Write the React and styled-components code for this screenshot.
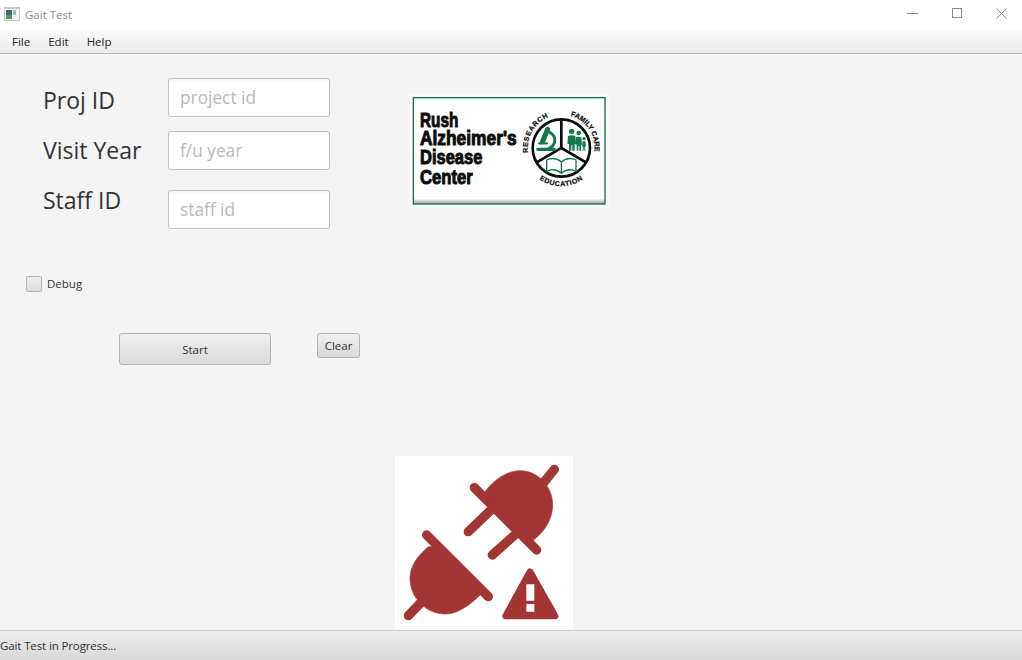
import React from "react";
import styled, { createGlobalStyle } from "styled-components";

const GlobalStyle = createGlobalStyle`
  html, body {
    margin: 0;
    height: 100%;
    overflow: hidden;
    background: #f4f4f4;
    font-family: "Open Sans", "Noto Sans", sans-serif;
  }
  #root {
    height: 100%;
  }
`;

const Window = styled.div`
  height: 660px;
  display: flex;
  flex-direction: column;
  color: #333;
`;

const TitleBar = styled.div`
  height: 30px;
  flex: none;
  background: #fff;
  display: flex;
  align-items: center;
  padding: 0 0 2px 4px;
  box-sizing: border-box;
`;

const AppTitle = styled.span`
  margin-left: 5px;
  font-size: 11.5px;
  color: #8c8c8c;
`;

const WindowControls = styled.div`
  margin: 0 0 2px auto;
  display: flex;
  align-items: center;
  gap: 34px;
  padding-right: 15px;
  color: #8a8a8a;
`;

const MenuBar = styled.div`
  height: 24px;
  flex: none;
  box-sizing: border-box;
  display: flex;
  align-items: center;
  padding: 0 0 1px 12px;
  gap: 18px;
  background: linear-gradient(#fafafa, #ebebeb);
  border-bottom: 1px solid #b9b9b9;
  font-size: 11.5px;
  color: #222;
`;

const Content = styled.main`
  flex: 1;
  min-height: 0;
  display: flex;
  flex-direction: column;
`;

const TopRow = styled.div`
  display: flex;
  align-items: flex-start;
  padding: 24px 0 0 43px;
`;

const Form = styled.div`
  display: flex;
  flex-direction: column;
  width: 287px;
`;

const FormRow = styled.div`
  display: flex;
  align-items: flex-start;
  margin-top: ${({ $top }) => $top || 0}px;
`;

const FieldLabel = styled.label`
  width: 125px;
  flex: none;
  font-size: 23px;
  line-height: 32px;
  color: #333;
  margin-top: ${({ $shift }) => $shift}px;
`;

const Field = styled.input`
  width: 162px;
  height: 39px;
  box-sizing: border-box;
  padding: 0 11px;
  border: 1px solid #c2c2c2;
  border-radius: 3px;
  background: linear-gradient(#f6f6f6, #fff 5px);
  font-family: inherit;
  font-size: 17.3px;
  outline: none;

  &::placeholder {
    color: #b9b9b9;
    opacity: 1;
  }
`;

const LogoFrame = styled.div`
  margin: 16px 0 0 79px;
  width: 200px;
  height: 114px;
  line-height: 0;
`;

const DebugRow = styled.label`
  display: flex;
  align-items: center;
  gap: 5px;
  margin: 46px 0 0 26px;
  height: 17px;
  font-size: 11.5px;
  color: #333;
`;

const CheckBox = styled.span`
  width: 16px;
  height: 16px;
  box-sizing: border-box;
  border: 1px solid #b5b5b5;
  border-radius: 2px;
  background: linear-gradient(#efefef, #dcdcdc);
`;

const ButtonRow = styled.div`
  display: flex;
  align-items: flex-start;
  gap: 46px;
  margin: 41px 0 0 119px;
`;

const Button = styled.button`
  width: ${({ $wide }) => ($wide ? 152 : 43)}px;
  height: ${({ $wide }) => ($wide ? 32 : 25)}px;
  padding: 0;
  border: 1px solid #b3b3b3;
  border-radius: 3px;
  background: linear-gradient(#efefef, #d9d9d9);
  font-family: inherit;
  font-size: 11.5px;
  color: #333;
`;

const AlertImage = styled.div`
  margin: auto 0 0 395px;
  width: 178px;
  height: 174px;
  background: #fff;
  line-height: 0;
`;

const StatusBar = styled.footer`
  height: 30px;
  flex: none;
  box-sizing: border-box;
  display: flex;
  align-items: center;
  border-top: 1px solid #cdcdcd;
  background: linear-gradient(#ececec, #d9d9d9);
  font-size: 11.5px;
  letter-spacing: -0.12px;
  color: #333;
  padding-bottom: 1px;
`;

const AppIcon = () => (
  <svg width="16" height="14" viewBox="0 0 16 14">
    <rect width="16" height="14" fill="#c9c9c9" />
    <rect x="1" y="2" width="14" height="11" fill="#f2f2f2" />
    <rect x="2" y="3" width="6" height="9" fill="#2e6f78" />
    <rect x="2" y="8" width="6" height="4" fill="#4d9a6a" />
    <rect x="9" y="3" width="3" height="5" fill="#a9b8bd" />
  </svg>
);

const ControlIcons = () => (
  <>
    <svg width="11" height="11" viewBox="0 0 11 11">
      <path d="M0 5.5h11" stroke="currentColor" fill="none" />
    </svg>
    <svg width="10" height="10" viewBox="0 0 10 10">
      <rect x=".5" y=".5" width="9" height="9" stroke="currentColor" fill="none" />
    </svg>
    <svg width="11" height="11" viewBox="0 0 11 11">
      <path d="M.5.5l10 10M10.5.5l-10 10" stroke="currentColor" fill="none" />
    </svg>
  </>
);

const logoLines = [
  ["Rush", 122, 115],
  ["Alzheimer's", 178, 290],
  ["Disease", 235, 187],
  ["Center", 293, 158],
];

const RushLogo = () => (
  <svg width="200" height="114" viewBox="27 24 600 342">
    <defs>
      <linearGradient id="bevel" x1="0" y1="0" x2="0" y2="1">
        <stop offset="0.95" stopColor="#fff" />
        <stop offset="1" stopColor="#999" />
      </linearGradient>
      <path id="arcLeft" d="M397 236A100 100 0 0 1 484 86" />
      <path id="arcRight" d="M477 86A100 100 0 0 1 574 230" />
      <path id="arcBottom" d="M385 243A114 114 0 0 0 583 243" />
    </defs>
    <rect x="27" y="24" width="600" height="342" fill="#fafafa" />
    <rect x="40" y="35" width="575" height="319" fill="url(#bevel)" stroke="#14734a" strokeWidth="4" />
    <g fontFamily="'Liberation Sans', sans-serif" fontWeight="700" fontSize="62" fill="#0c0c0c" stroke="#0c0c0c" strokeWidth="3">
      {logoLines.map(([line, y, len]) => (
        <text key={line} x="60" y={y} textLength={len} lengthAdjust="spacingAndGlyphs">
          {line}
        </text>
      ))}
    </g>
    <g fill="none" stroke="#0c0c0c" strokeWidth="8">
      <circle cx="484" cy="186" r="86" />
      <path d="M484 100V186L410 229M484 186L558 229" />
    </g>
    <g fill="none" stroke="#14794a" strokeLinecap="round">
      <path d="M428 166L443 130" strokeWidth="15" />
      <path d="M448 138C470 150 470 176 448 186" strokeWidth="9" />
      <path d="M418 172H440" strokeWidth="7" />
      <path d="M414 190H462" strokeWidth="10" />
    </g>
    <g fill="#14794a">
      <circle cx="515" cy="136" r="8" />
      <circle cx="536" cy="141" r="7" />
      <circle cx="552" cy="158" r="5" />
      <path d="M504 150q11-5 22 0l2 24h-4v20h-7v-16h-3v16h-7v-20h-5z" />
      <path d="M528 154q8-3 16 0l2 22h-3v18h-5v-14h-3v14h-5v-18h-4z" />
      <path d="M548 166q4-2 8 0l2 14h-2v14h-3v-10h-2v10h-3v-14h-2z" />
    </g>
    <path d="M440 222c14-7 30-6 44 6 14-12 30-13 44-6v34c-14-7-30-6-44 6-14-12-30-13-44-6zM484 228v34" fill="#fff" stroke="#14794a" strokeWidth="4" />
    <g fontFamily="'Liberation Sans', sans-serif" fontWeight="700" fontSize="21" fill="#111" stroke="#111" strokeWidth=".8" textAnchor="middle">
      <text letterSpacing="2"><textPath href="#arcLeft" startOffset="50%">RESEARCH</textPath></text>
      <text><textPath href="#arcRight" startOffset="50%">FAMILY CARE</textPath></text>
      <text letterSpacing="2"><textPath href="#arcBottom" startOffset="50%">EDUCATION</textPath></text>
    </g>
  </svg>
);

const UnpluggedIcon = () => (
  <svg width="178" height="174" viewBox="30 18 534 522">
    <g fill="#a33535" stroke="#a33535" strokeLinecap="round" strokeLinejoin="round">
      <path d="M300 145L300 125C330 85 370 62 405 62C460 62 503 110 503 165C503 205 480 245 445 270L445 290Z" strokeWidth="2" />
      <path d="M268 113L455 300M320 178L250 245M395 250L322 315M470 105L508 58" fill="none" strokeWidth="28" />
      <path d="M160 290L130 290C95 320 75 350 75 385C75 445 125 492 180 492C215 492 250 470 285 435L285 415Z" strokeWidth="2" />
      <path d="M125 255L310 440M115 450L70 497" fill="none" strokeWidth="28" />
      <path d="M435 365L510 498H362Z" strokeWidth="20" />
    </g>
    <path d="M424 403h24v49h-24zM424 462h24v23h-24z" fill="#fff" />
  </svg>
);

export default function App() {
  return (
    <Window>
      <GlobalStyle />
      <TitleBar>
        <AppIcon />
        <AppTitle>Gait Test</AppTitle>
        <WindowControls>
          <ControlIcons />
        </WindowControls>
      </TitleBar>
      <MenuBar>
        <span>File</span>
        <span>Edit</span>
        <span>Help</span>
      </MenuBar>
      <Content>
        <TopRow>
          <Form>
            <FormRow>
              <FieldLabel $shift={6}>Proj ID</FieldLabel>
              <Field placeholder="project id" />
            </FormRow>
            <FormRow $top={14}>
              <FieldLabel $shift={3}>Visit Year</FieldLabel>
              <Field placeholder="f/u year" />
            </FormRow>
            <FormRow $top={20}>
              <FieldLabel $shift={-6}>Staff ID</FieldLabel>
              <Field placeholder="staff id" />
            </FormRow>
          </Form>
          <LogoFrame>
            <RushLogo />
          </LogoFrame>
        </TopRow>
        <DebugRow>
          <CheckBox />
          Debug
        </DebugRow>
        <ButtonRow>
          <Button $wide>Start</Button>
          <Button>Clear</Button>
        </ButtonRow>
        <AlertImage>
          <UnpluggedIcon />
        </AlertImage>
      </Content>
      <StatusBar>Gait Test in Progress...</StatusBar>
    </Window>
  );
}
